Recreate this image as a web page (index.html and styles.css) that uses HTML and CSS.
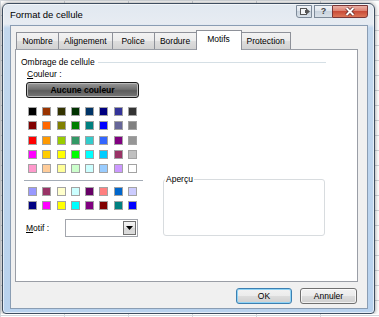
FILE: index.html
```html
<!DOCTYPE html>
<html>
<head>
    <meta charset="utf-8"/>
    <title>Format de cellule</title>
    <link rel="stylesheet" href="styles.css">
</head>
<body>
    <div class="window">
        <div class="titlebar">
            <span class="title">Format de cellule</span>
            <div class="controls">
                <span class="ctl ctl-collapse">
                    <svg width="14" height="11" viewBox="0 0 14 11"><rect x="3.5" y="2.5" width="6" height="6" fill="#f4f6f8" stroke="#555"/><path d="M8 4h2V3l3 2.5L10 8V7H8z" fill="#555"/></svg>
                </span>
                <span class="ctl ctl-help">?</span>
                <span class="ctl ctl-close">
                    <svg width="34" height="11" viewBox="0 0 34 11"><path d="M13.5 2l7 7M20.5 2l-7 7" stroke="#5a2020" stroke-width="3.4"/><path d="M13.5 2l7 7M20.5 2l-7 7" stroke="#fff" stroke-width="2"/></svg>
                </span>
            </div>
        </div>
        <div class="dialog">
            <div class="tabs">
                <div class="tab">Nombre</div>
                <div class="tab">Alignement</div>
                <div class="tab">Police</div>
                <div class="tab">Bordure</div>
                <div class="tab active">Motifs</div>
                <div class="tab">Protection</div>
            </div>
            <div class="panel">
                <div class="group-title"><span>Ombrage de cellule</span></div>
                <div class="content">
                    <div class="colors">
                        <div class="label"><u>C</u>ouleur :</div>
                        <div class="no-color">Aucune couleur</div>
                        <div class="palette">
                            <span class="swatch" style="background:#000000"></span>
                            <span class="swatch" style="background:#993300"></span>
                            <span class="swatch" style="background:#333300"></span>
                            <span class="swatch" style="background:#003300"></span>
                            <span class="swatch" style="background:#003366"></span>
                            <span class="swatch" style="background:#000080"></span>
                            <span class="swatch" style="background:#333399"></span>
                            <span class="swatch" style="background:#333333"></span>
                            <span class="swatch" style="background:#800000"></span>
                            <span class="swatch" style="background:#ff6600"></span>
                            <span class="swatch" style="background:#808000"></span>
                            <span class="swatch" style="background:#008000"></span>
                            <span class="swatch" style="background:#008080"></span>
                            <span class="swatch" style="background:#0000ff"></span>
                            <span class="swatch" style="background:#666699"></span>
                            <span class="swatch" style="background:#808080"></span>
                            <span class="swatch" style="background:#ff0000"></span>
                            <span class="swatch" style="background:#ff9900"></span>
                            <span class="swatch" style="background:#99cc00"></span>
                            <span class="swatch" style="background:#339966"></span>
                            <span class="swatch" style="background:#33cccc"></span>
                            <span class="swatch" style="background:#3366ff"></span>
                            <span class="swatch" style="background:#800080"></span>
                            <span class="swatch" style="background:#969696"></span>
                            <span class="swatch" style="background:#ff00ff"></span>
                            <span class="swatch" style="background:#ffcc00"></span>
                            <span class="swatch" style="background:#ffff00"></span>
                            <span class="swatch" style="background:#00ff00"></span>
                            <span class="swatch" style="background:#00ffff"></span>
                            <span class="swatch" style="background:#00ccff"></span>
                            <span class="swatch" style="background:#993366"></span>
                            <span class="swatch" style="background:#c0c0c0"></span>
                            <span class="swatch" style="background:#ff99cc"></span>
                            <span class="swatch" style="background:#ffcc99"></span>
                            <span class="swatch" style="background:#ffff99"></span>
                            <span class="swatch" style="background:#ccffcc"></span>
                            <span class="swatch" style="background:#ccffff"></span>
                            <span class="swatch" style="background:#99ccff"></span>
                            <span class="swatch" style="background:#cc99ff"></span>
                            <span class="swatch" style="background:#ffffff"></span>
                        </div>
                        <div class="sep"></div>
                        <div class="palette">
                            <span class="swatch" style="background:#9999ff"></span>
                            <span class="swatch" style="background:#993366"></span>
                            <span class="swatch" style="background:#ffffcc"></span>
                            <span class="swatch" style="background:#ccffff"></span>
                            <span class="swatch" style="background:#660066"></span>
                            <span class="swatch" style="background:#ff8080"></span>
                            <span class="swatch" style="background:#0066cc"></span>
                            <span class="swatch" style="background:#ccccff"></span>
                            <span class="swatch" style="background:#000080"></span>
                            <span class="swatch" style="background:#ff00ff"></span>
                            <span class="swatch" style="background:#ffff00"></span>
                            <span class="swatch" style="background:#00ffff"></span>
                            <span class="swatch" style="background:#800080"></span>
                            <span class="swatch" style="background:#800000"></span>
                            <span class="swatch" style="background:#008080"></span>
                            <span class="swatch" style="background:#0000ff"></span>
                        </div>
                        <div class="motif-row">
                            <span class="label"><u>M</u>otif :</span>
                            <div class="select">
                                <span class="drop"><svg width="7" height="4" viewBox="0 0 7 4"><path d="M0 0h7L3.5 4z" fill="#000"/></svg></span>
                            </div>
                        </div>
                    </div>
                    <fieldset class="preview">
                        <legend>Aperçu</legend>
                        <div class="preview-area"></div>
                    </fieldset>
                </div>
            </div>
            <div class="actions">
                <button class="btn default">OK</button>
                <button class="btn">Annuler</button>
            </div>
        </div>
    </div>
</body>
</html>
```

FILE: styles.css
```css
body {
    margin: 0;
    overflow: hidden;
    font-family: "Liberation Sans", Arial, sans-serif;
    font-size: 8.5px;
    line-height: 11px;
    color: #000;
    background-color: #fff;
    background-image:
        linear-gradient(#d3d7dc 1px, transparent 1px),
        linear-gradient(90deg, #d3d7dc 1px, transparent 1px);
    background-size: 64px 15px;
}
.window {
    margin: 3px 0 0 2px;
    width: 373px;
    height: 311px;
    box-sizing: border-box;
    border: 1px solid #3f4e60;
    border-radius: 6px 6px 4px 4px;
    padding: 0 6px 4px 7px;
    display: flex;
    flex-direction: column;
    background: linear-gradient(#e1e8f0 0, #e7ecf2 20px, #c3d8ee 24px, #b8d2ee 100%);
    box-shadow: 0 0 4px rgba(0, 0, 0, 0.45), inset 0 0 0 1px rgba(255, 255, 255, 0.6);
}
.titlebar {
    height: 21px;
    display: flex;
    align-items: center;
    justify-content: space-between;
}
.title {
    font-size: 9.5px;
}
.controls {
    display: flex;
    align-self: flex-start;
    margin-top: 1px;
}
.ctl {
    height: 13px;
    box-sizing: border-box;
    border: 1px solid #7d8a99;
    display: flex;
    align-items: center;
    justify-content: center;
}
.ctl-collapse {
    width: 16px;
    margin-right: 2px;
    border-radius: 0 0 0 3px;
    background: linear-gradient(#f1f4f8, #dce3eb 50%, #c9d3de 50%, #d8e0e8);
}
.ctl-help {
    width: 18px;
    font-weight: bold;
    font-size: 9px;
    color: #444;
    border-right: none;
    background: linear-gradient(#f1f4f8, #dce3eb 50%, #c9d3de 50%, #d8e0e8);
}
.ctl-close {
    width: 36px;
    border-color: #7a3636;
    border-radius: 0 0 3px 0;
    background: linear-gradient(#eab0a6, #dc7d6c 50%, #c94c38 50%, #dc7658);
}
.dialog {
    flex: 1;
    display: flex;
    flex-direction: column;
    background: #f0f0f0;
    border: 1px solid #8a9db3;
    padding: 4px 9px 4px 4px;
}
.tabs {
    display: flex;
    align-items: flex-end;
    height: 20px;
    padding-left: 1px;
    margin-bottom: -1px;
    position: relative;
    z-index: 1;
}
.tab {
    height: 17px;
    margin-bottom: 1px;
    margin-right: -1px;
    box-sizing: border-box;
    min-width: 43px;
    padding: 0 5px;
    border: 1px solid #8e9199;
    border-bottom: none;
    text-align: center;
    line-height: 16px;
    background: linear-gradient(#f3f3f3, #ebebeb 50%, #dedede 50%, #d2d2d2);
}
.tab.active {
    height: 20px;
    margin-bottom: 0;
    min-width: 46px;
    line-height: 17px;
    background: #fff;
    position: relative;
    z-index: 1;
}
.panel {
    height: 233px;
    box-sizing: border-box;
    background: #fff;
    border: 1px solid #9a9ea6;
    padding: 7px 0 0 5px;
}
.group-title {
    display: flex;
    align-items: center;
    margin-right: 31px;
}
.group-title::after {
    content: "";
    flex: 1;
    height: 1px;
    margin-left: 3px;
    background: #d5dfe5;
}
.content {
    display: flex;
    align-items: flex-end;
    margin-left: 3px;
}
.colors {
    width: 119px;
}
.colors > .label {
    margin: 1px 0 0 3px;
}
.no-color {
    margin: 2px 0 0 2px;
    width: 113px;
    height: 16px;
    box-sizing: border-box;
    border: 1px solid #1c1c1c;
    border-radius: 3px;
    box-shadow: inset 0 0 0 1px #b9b9b9;
    background: linear-gradient(#9a9a9a, #707070 45%, #5c5c5c 55%, #787878);
    font-weight: bold;
    text-align: center;
    line-height: 14px;
}
.palette {
    display: grid;
    grid-template-columns: repeat(8, 9px);
    grid-auto-rows: 9px;
    gap: 5.3px;
    margin: 9px 0 0 4px;
}
.palette + .sep + .palette {
    margin-top: 6px;
}
.swatch {
    box-sizing: border-box;
    border: 1px solid #a3a3a3;
}
.sep {
    height: 1px;
    margin-top: 7px;
    background: #a4acb6;
}
.motif-row {
    display: flex;
    align-items: center;
    margin-top: 9px;
}
.motif-row .label {
    width: 39px;
    margin-left: 2px;
}
.select {
    width: 73px;
    height: 18px;
    box-sizing: border-box;
    border: 1px solid #a3a6ad;
    background: #fff;
    display: flex;
    justify-content: flex-end;
    padding: 1px;
}
.drop {
    width: 13px;
    box-sizing: border-box;
    border: 1px solid #707070;
    background: linear-gradient(#f4f4f4, #e6e6e6 50%, #d6d6d6 50%, #dcdcdc);
    display: flex;
    align-items: center;
    justify-content: center;
}
.preview {
    margin: 0 0 1px 20px;
    padding: 0;
    width: 162px;
    box-sizing: border-box;
    border: 1px solid #d8dcdf;
    border-radius: 3px;
}
.preview legend {
    padding: 0 1px;
    margin-left: 1px;
}
.preview-area {
    height: 50px;
}
.actions {
    display: flex;
    justify-content: flex-end;
    gap: 8px;
    margin: 6px 1px 0 0;
}
.btn {
    height: 16px;
    box-sizing: border-box;
    padding: 0;
    font: inherit;
    color: #000;
    border: 1px solid #707070;
    border-radius: 3px;
    background: linear-gradient(#f2f2f2, #ebebeb 50%, #dddddd 50%, #cfcfcf);
    box-shadow: inset 0 0 0 1px rgba(255, 255, 255, 0.7);
}
.btn.default {
    width: 56px;
    border-color: #3c7fb1;
    box-shadow: inset 0 0 0 1px #8fd3f5;
}
.btn:not(.default) {
    width: 57px;
}
```
